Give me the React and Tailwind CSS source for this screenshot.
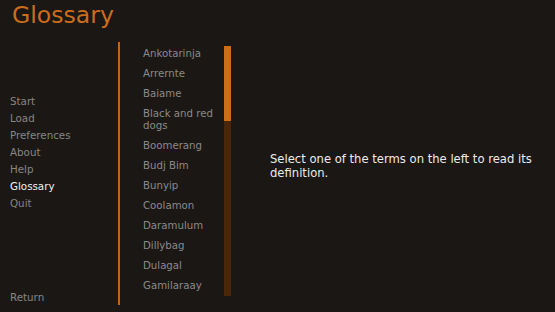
import React from "react";

const nav = ["Start", "Load", "Preferences", "About", "Help", "Glossary", "Quit"];
const terms = [
  "Ankotarinja",
  "Arrernte",
  "Baiame",
  "Black and red dogs",
  "Boomerang",
  "Budj Bim",
  "Bunyip",
  "Coolamon",
  "Daramulum",
  "Dillybag",
  "Dulagal",
  "Gamilaraay",
];

export default function App() {
  return (
    <div
      className="flex w-[555px] h-[312px] overflow-hidden bg-[#1b1714]"
      style={{ fontFamily: '"DejaVu Sans", sans-serif' }}
    >
      <div className="flex flex-col w-[118px] shrink-0">
        <div className="pl-[12px] pt-[1px] text-[23.6px] leading-[29px] text-[#cc6d1c]">Glossary</div>
        <div className="flex flex-col pl-[10px] mt-[63px] text-[10.3px] leading-[17px]">
          {nav.map((n) => (
            <div key={n} className={n === "Glossary" ? "text-[#f0f0f0]" : "text-[#868686]"}>
              {n}
            </div>
          ))}
        </div>
        <div className="mt-auto mb-[6px] pl-[10px] text-[10.3px] leading-[17px] text-[#868686]">Return</div>
      </div>
      <div className="w-[2px] shrink-0 mt-[42px] mb-[7px] bg-[#c0661a]" />
      <div className="w-[104px] shrink-0 pl-[23px] pr-[6px] pt-[48px] flex flex-col gap-[8px] text-[10.2px] leading-[12px] text-[#8a8a8a]">
        {terms.map((t) => (
          <div key={t}>{t}</div>
        ))}
      </div>
      <div className="w-[7px] shrink-0 mt-[46px] h-[250px] flex flex-col bg-[#4a2708]">
        <div className="h-[75px] bg-[#cf6d14]" />
      </div>
      <div className="flex-1 pl-[39px] pt-[152px] pr-[8px] text-[11.6px] leading-[14px] text-[#ececec]">
        Select one of the terms on the left to read its definition.
      </div>
    </div>
  );
}
